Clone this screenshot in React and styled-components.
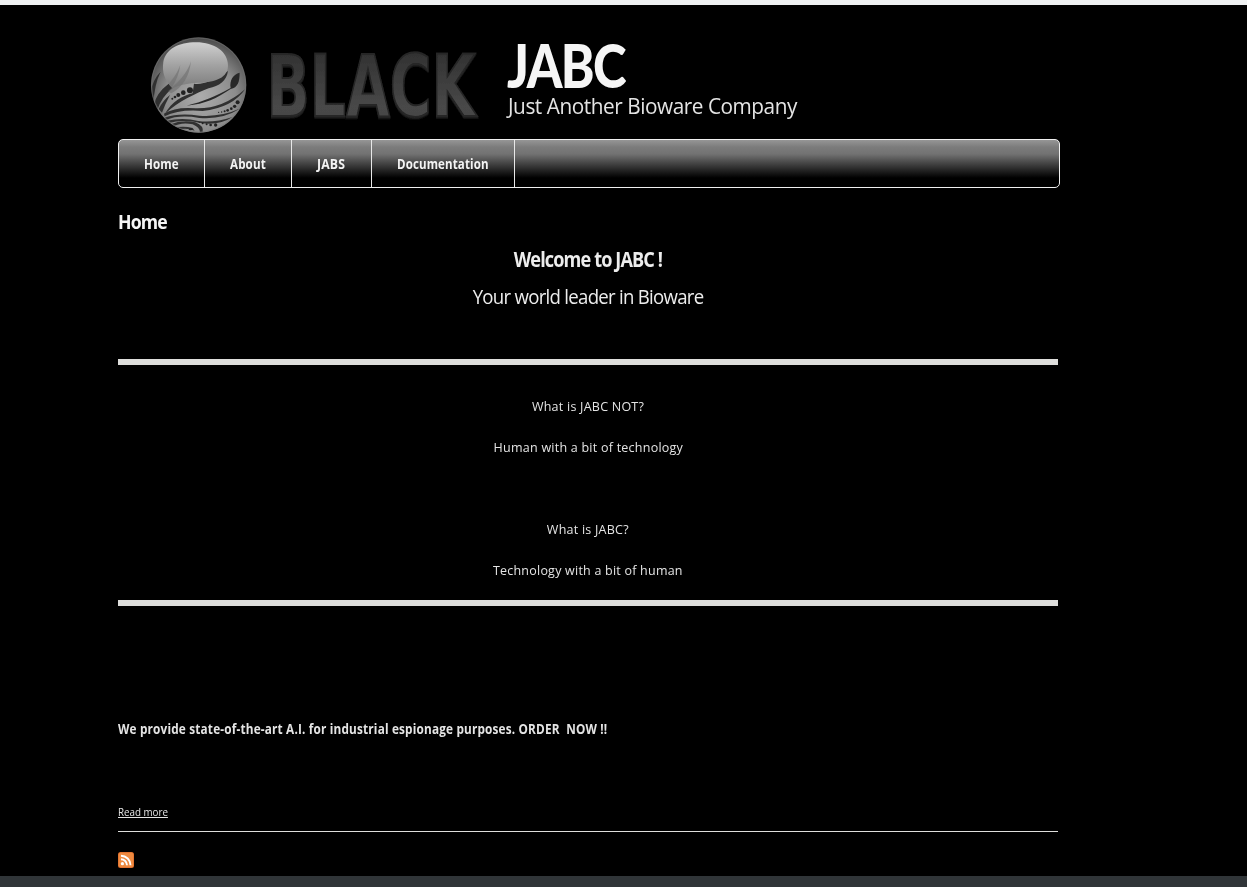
import React from "react";
import styled, { createGlobalStyle } from "styled-components";

const Global = createGlobalStyle`
  * { box-sizing: border-box; }
  html, body { margin: 0; background: #000; overflow: hidden; }
  body { font-family: "Open Sans", "Noto Sans", sans-serif; color: #e4e4e4; }
`;

const Page = styled.div`
  height: 887px;
  display: flex;
  flex-direction: column;
  border-top: 5px solid #eff1f2;
  background: #000;
`;
const Container = styled.div`
  flex: 1;
  width: 942px;
  margin-left: 118px;
`;
const Header = styled.header`
  display: flex;
  height: 134px;
`;
const Logo = styled.svg`
  display: block;
  width: 389px;
  height: 134px;
`;
const Branding = styled.div`
  padding-top: 30px;
`;
const Fit = styled.span`
  display: inline-block;
  white-space: pre;
  transform: scaleX(${(p) => p.$scale || 1});
  transform-origin: ${(p) => (p.$center ? "center" : "left")};
  letter-spacing: ${(p) => p.$track || 0}px;
`;
const SiteName = styled.h1`
  margin: 0;
  width: 300px;
  font-family: Lato, sans-serif;
  font-size: 60px;
  line-height: 60px;
  font-weight: 900;
  color: #f5f5f5;
`;
const Slogan = styled.div`
  width: 300px;
  padding-left: 1px;
  font-size: 22.5px;
  line-height: 22px;
`;
const Nav = styled.nav`
  display: flex;
  height: 49px;
  border: 1px solid #f0f0f0;
  border-radius: 5px;
  overflow: hidden;
  background: linear-gradient(#969696 0, #7c7c7c 7px, #727272 14px, #505050 21px, #202020 31px, #000 38px);
`;
const NavItem = styled.a`
  width: ${(p) => p.$width}px;
  padding-left: 25px;
  border-right: 1px solid #e8e8e8;
  font-size: 13.4px;
  font-weight: 700;
  line-height: 49px;
  color: #f3f3f3;
`;
const Main = styled.main`
  width: 940px;
`;
const PageTitle = styled.h2`
  margin: 20px 0 0;
  font-size: 20px;
  line-height: 27px;
  color: #f5f5f5;
`;
const Heading = styled.h3`
  margin: ${(p) => p.$top}px 0 0;
  font-size: 20.5px;
  line-height: 27px;
  font-weight: ${(p) => (p.$light ? 400 : 700)};
  text-align: center;
  color: #ededed;
`;
const Rule = styled.hr`
  height: 6px;
  margin: ${(p) => p.$top}px 0 0;
  border: 0;
  background: #dededc;
`;
const Line = styled.p`
  margin: ${(p) => p.$top}px 0 0;
  font-size: 13.4px;
  line-height: 20px;
  text-align: center;
`;
const Notice = styled.p`
  margin: 113px 0 0;
  font-size: 13.4px;
  line-height: 20px;
  font-weight: 700;
`;
const More = styled.div`
  height: 93px;
  padding-top: 65px;
  border-bottom: 1px solid #dededc;
  font-size: 10.3px;
  line-height: 16px;
`;
const MoreLink = styled(Fit)`
  text-decoration: underline;
  text-underline-offset: 1px;
`;
const Feed = styled.svg`
  display: block;
  width: 16px;
  height: 16px;
  margin-top: 20px;
`;
const Footer = styled.footer`
  height: 11px;
  background: #303538;
`;

const links = [
  ["Home", 86, 0.867],
  ["About", 87, 0.867],
  ["JABS", 80, 0.915],
  ["Documentation", 143, 0.86],
];

const dots = [
  [152, 196, 9], [132, 203, 7], [117, 210, 6], [107, 216, 4], [99, 221, 3],
  [295, 232, 6], [286, 244, 5], [276, 251, 4], [265, 256, 4], [256, 259, 3], [247, 261, 2], [238, 262, 2],
  [229, 300, 5], [214, 300, 4], [202, 298, 3], [190, 295, 3], [180, 292, 2],
];

function SphereLogo() {
  return (
    <Logo viewBox="0 0 389 134" aria-label="Black">
      <defs>
        <radialGradient id="ball" cx=".52" cy=".62" r=".62">
          <stop offset="0" stopColor="#acacac" />
          <stop offset=".6" stopColor="#8c8c8c" />
          <stop offset="1" stopColor="#484848" />
        </radialGradient>
        <linearGradient id="shine" x2="0" y2="1">
          <stop offset="0" stopColor="#d0d0d0" />
          <stop offset=".5" stopColor="#a2a2a2" />
          <stop offset="1" stopColor="#7c7c7c" />
        </linearGradient>
        <linearGradient id="letter" x2="0" y2="1">
          <stop offset="0" stopColor="#2b2b2b" />
          <stop offset=".7" stopColor="#484848" />
          <stop offset="1" stopColor="#444" />
        </linearGradient>
        <filter id="bevel" x="-5%" y="-10%" width="110%" height="120%">
          <feDropShadow dx="0" dy="1.5" stdDeviation=".5" floodColor="#1c1c1c" />
        </filter>
        <clipPath id="round"><circle cx="178" cy="180" r="142" /></clipPath>
      </defs>
      <g transform="translate(21.3 20) scale(.33333)">
        <circle cx="178" cy="180" r="143" fill="url(#ball)" />
        <g clipPath="url(#round)">
          <g fill="#303030">
            <path d="M164 176C190 180 226 166 266 138C262 168 240 183 208 190C170 206 120 226 76 268C98 228 130 213 160 205Z" />
            <path d="M34 218Q34 170 64 140Q45 178 42 238ZM45 238Q50 205 88 176L100 190Q66 216 54 256ZM58 252Q73 224 92 210Q78 236 68 263Z" />
            <path d="M74 266Q110 244 170 250Q250 252 318 192Q280 248 190 258Q120 252 76 274Z" />
            <path d="M76 278Q120 262 180 272Q245 277 304 250Q250 285 180 279Q120 268 80 285Z" />
            <path d="M80 288Q130 276 177 288Q225 294 280 276Q240 302 184 294Q133 281 85 295Z" />
            <path d="M90 299Q130 283 168 292Q195 303 190 322L182 322Q182 307 160 298Q127 290 97 306Z" />
            <path d="M101 309Q132 301 160 309L166 317Q138 306 110 316Z" />
          </g>
          <path d="M274 189C270 166 282 147 301 143C301 169 296 188 274 192C232 220 199 237 142 242C190 230 229 214 274 189" fill="#282828" />
          <path d="M36 208Q44 262 83 304M44 250Q62 287 102 314" fill="none" stroke="#303030" strokeWidth="5" />
        </g>
        <path d="M100 190C75 165 68 142 72 112C79 72 118 52 170 52C226 52 266 81 266 121C266 157 233 174 166 174C139 176 120 181 100 190Z" fill="url(#shine)" />
        <path d="M96 205Q148 177 155 109Q143 151 86 199M88 177Q112 150 123 120Q118 157 97 188" fill="#707070" opacity=".6" />
        <g fill="#222">
          {dots.map(([x, y, r]) => <circle key={`${x}-${y}`} cx={x} cy={y} r={r} />)}
          <ellipse cx="154" cy="313" rx="6" ry="3" />
        </g>
        <circle cx="178" cy="180" r="141" fill="none" stroke="#777" strokeWidth="3" opacity=".5" />
      </g>
      <text
        x="148.5" y="111" textLength="209" lengthAdjust="spacingAndGlyphs"
        fontFamily="DejaVu Sans Condensed, DejaVu Sans" fontWeight="700" fontSize="86"
        fill="url(#letter)" stroke="#252525" strokeWidth="2" filter="url(#bevel)"
      >BLACK</text>
    </Logo>
  );
}

export default function App() {
  return (
    <Page>
      <Global />
      <Container>
        <Header>
          <SphereLogo />
          <Branding>
            <SiteName><Fit $scale={0.85} $track={-2}>JABC</Fit></SiteName>
            <Slogan><Fit $scale={0.924} $track={-0.5}>Just Another Bioware Company</Fit></Slogan>
          </Branding>
        </Header>
        <Nav>
          {links.map(([label, width, scale]) => (
            <NavItem key={label} $width={width}><Fit $scale={scale} $track={0.15}>{label}</Fit></NavItem>
          ))}
        </Nav>
        <Main>
          <PageTitle><Fit $scale={0.884} $track={-1}>Home</Fit></PageTitle>
          <Heading $top={11}><Fit $center $scale={0.884} $track={-1}>Welcome to JABC !</Fit></Heading>
          <Heading $top={10} $light><Fit $center $scale={0.908} $track={-0.8}>Your world leader in Bioware</Fit></Heading>
          <Rule $top={49} />
          <Line $top={31}><Fit $center $scale={0.935} $track={0.25}>What is JABC NOT?</Fit></Line>
          <Line $top={21}><Fit $center $scale={0.935} $track={0.25}>Human with a bit of technology</Fit></Line>
          <Line $top={62}><Fit $center $scale={0.935} $track={0.25}>What is JABC?</Fit></Line>
          <Line $top={21}><Fit $center $scale={0.932} $track={0.25}>Technology with a bit of human</Fit></Line>
          <Rule $top={20} />
          <Notice><Fit $scale={0.88} $track={0.2}>{"We provide state-of-the-art A.I. for industrial espionage purposes. ORDER  NOW !!"}</Fit></Notice>
          <More><MoreLink $scale={0.95}>Read more</MoreLink></More>
          <Feed viewBox="0 0 16 16">
            <rect width="16" height="16" rx="2.5" fill="#e06d2c" />
            <rect x=".7" y=".7" width="14.6" height="14.6" rx="2" fill="#ee8a40" />
            <circle cx="4.4" cy="11.7" r="1.6" fill="#fff" />
            <path d="M3 7.2a6 6 0 0 1 6 6M3 3.7a9.5 9.5 0 0 1 9.5 9.5" fill="none" stroke="#fff" strokeWidth="1.9" />
          </Feed>
        </Main>
      </Container>
      <Footer />
    </Page>
  );
}
